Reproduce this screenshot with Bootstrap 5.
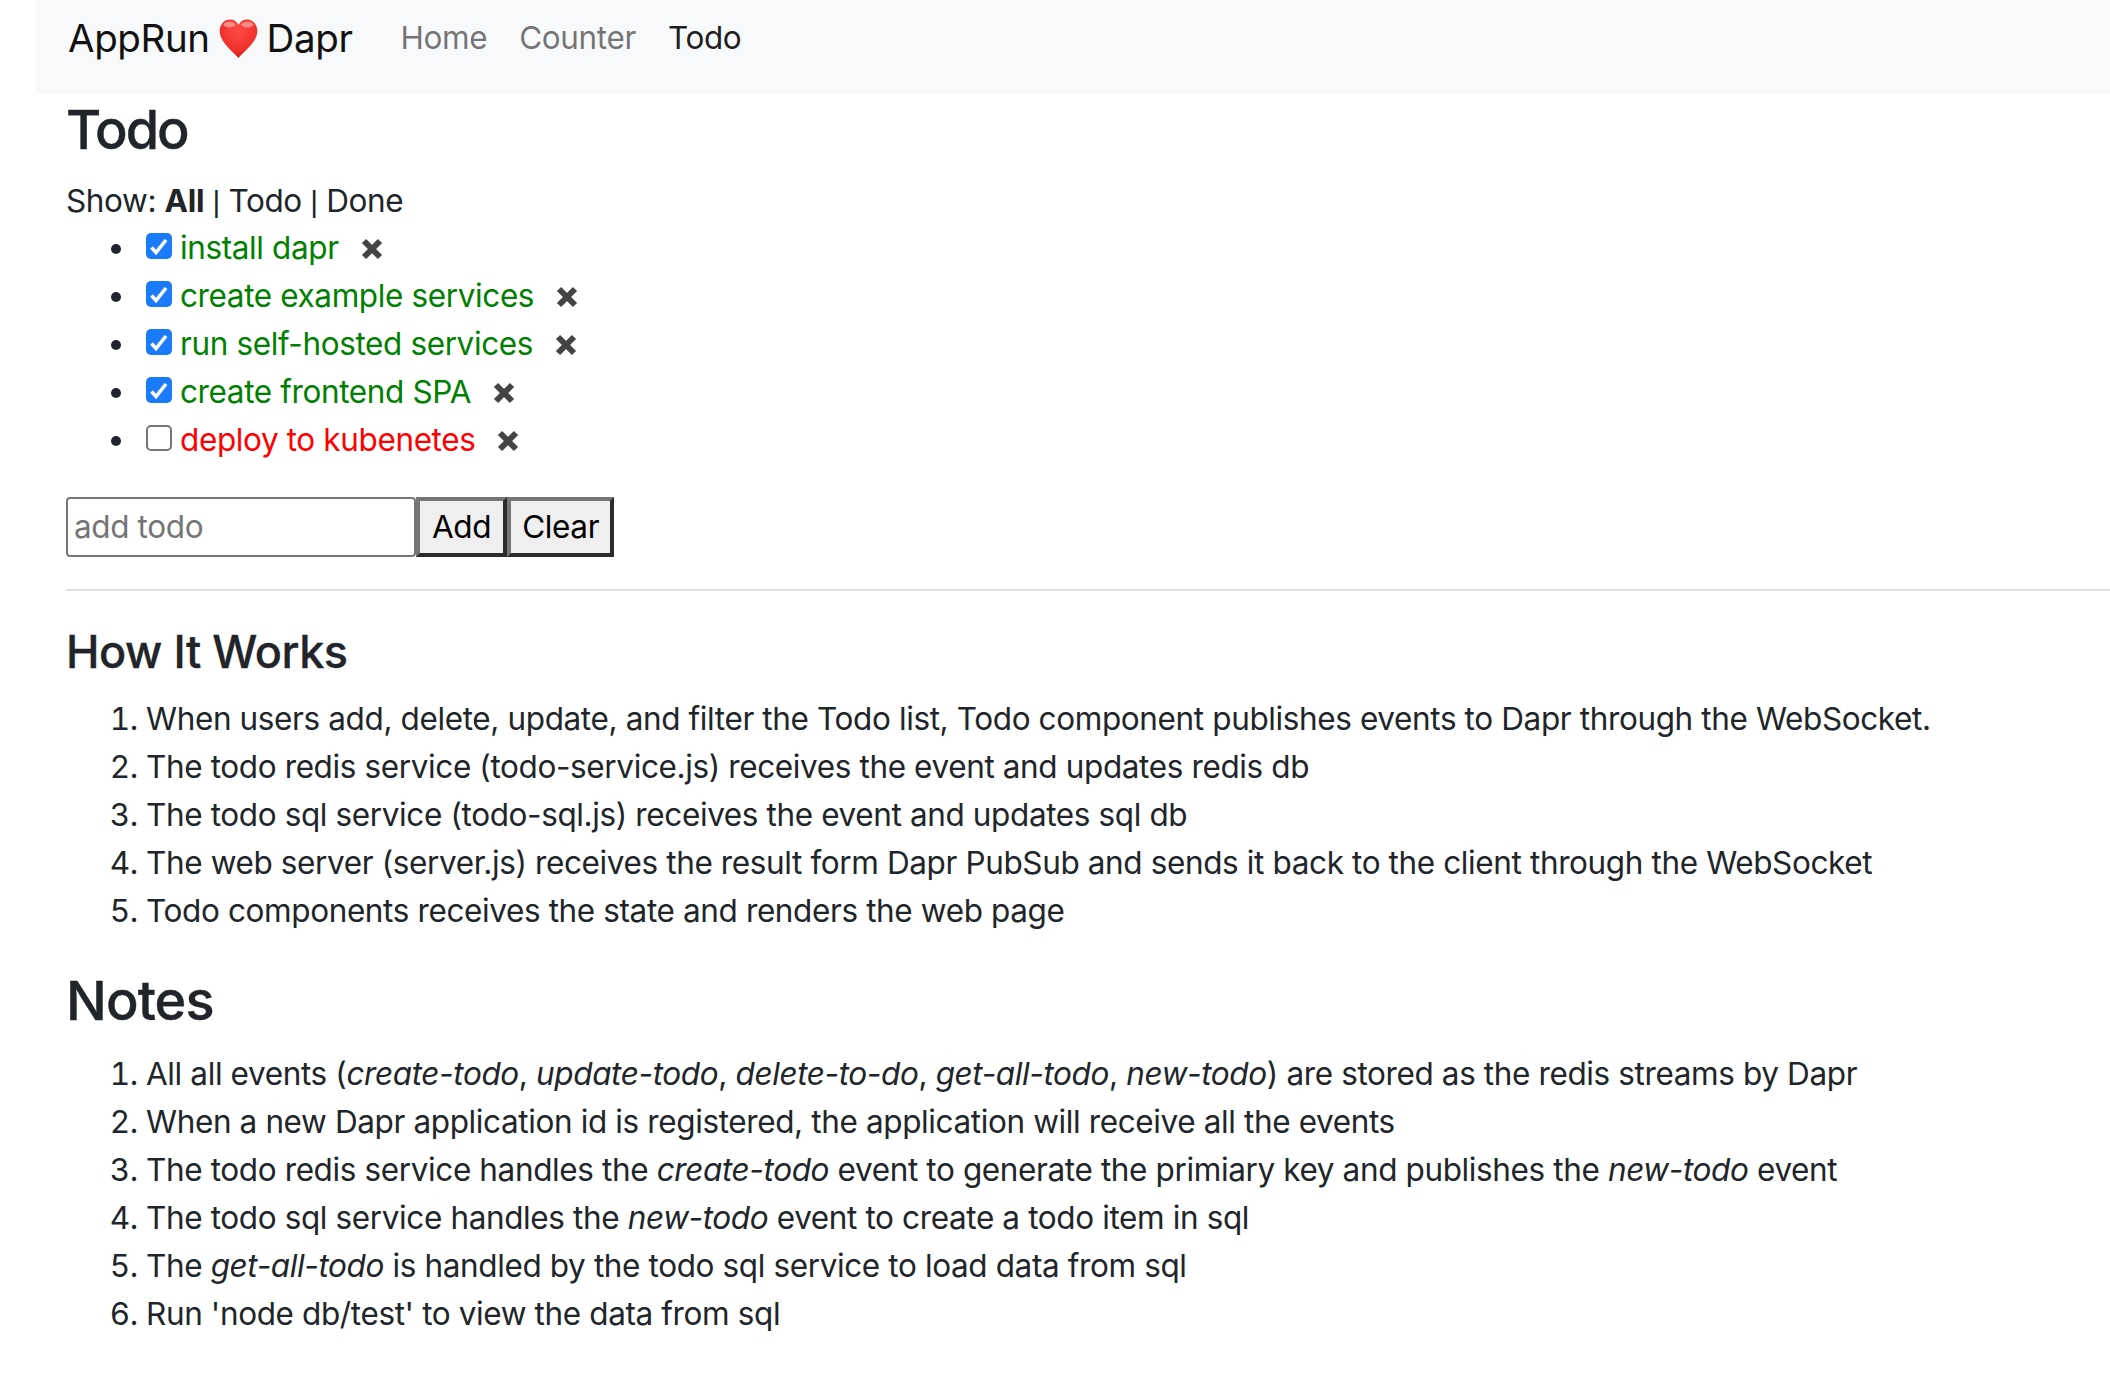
<!DOCTYPE html>
<html lang="en">
<head>
<meta charset="utf-8">
<title>AppRun Dapr</title>
<link href="https://cdn.jsdelivr.net/npm/bootstrap@5.3.0/dist/css/bootstrap.min.css" rel="stylesheet">
<style>
html { font-size: 32px; }
body { font-family: Inter, "Liberation Sans", sans-serif; font-size: 31.5px; overflow: hidden; letter-spacing: -0.38px; line-height: 48px; }
.page-shell { margin-left: 36px; }
.top-bar { height: 94px; padding: 14px 32px 0; align-items: flex-start; justify-content: flex-start; }
.top-bar .navbar-brand { font-size: 38.5px; letter-spacing: -0.4px; margin-right: 32px; padding: 0; line-height: 48px; color: #111; display: flex; align-items: center; gap: 9px; }
.top-bar .nav-link { padding: 0 16px; font-size: 31.5px; line-height: 48px; color: rgba(0,0,0,.55); }
.top-bar .nav-link.active { color: rgba(0,0,0,.9); }
.main-area { padding-left: 30px; }
.page-title { font-size: 54px; font-weight: 500; letter-spacing: -0.9px; margin: 3px 0 15px; line-height: 65px; -webkit-text-stroke: .4px; }
.page-title.todo-head { letter-spacing: -2px; }
.page-title.notes-head { margin-bottom: 17px; }
.sub-title { font-size: 45px; font-weight: 500; letter-spacing: -0.45px; margin: 0 0 16px; line-height: 54px; -webkit-text-stroke: .3px; }
.show-line { margin: 0 0 -1px; height: 48px; }
.show-line a, .todo-x { color: inherit; text-decoration: none; }
.pipe-sep { font-family: "Liberation Sans", sans-serif; font-size: 30px; line-height: 1; }
.todo-list { margin: 0 0 33px; padding-left: 72px; }
.todo-list li { height: 48px; padding-left: 8px; }
.todo-list input { appearance: none; width: 26px; height: 26px; margin: 0 8px 0 0; vertical-align: 0; border: 2px solid #767676; border-radius: 5px; background: #fff; }
.todo-list input:checked { border: 0; background: #1a7cfa url("data:image/svg+xml,%3Csvg xmlns='http://www.w3.org/2000/svg' viewBox='0 0 26 26'%3E%3Cpath d='M5.5 14.5l4.5 5L20 7' fill='none' stroke='%23fff' stroke-width='3.6'/%3E%3C/svg%3E") center/100% no-repeat; }
.is-done { color: green; }
.is-open { color: red; }
.todo-x { margin-left: 22px; display: inline-block; vertical-align: 1px; line-height: 0; }
.add-form { display: flex; align-items: stretch; height: 60px; }
.add-input { width: 350px; border: 2px solid #767676; border-radius: 4px; padding: 0 6px; font-size: 31.5px; letter-spacing: -0.38px; }
.add-input::placeholder { color: #757575; }
.plain-btn { background: #efefef; border: 4px solid #767676; border-color: #767676 #2b2b2b #2b2b2b #767676; color: #000; padding: 0 12px; font-size: 31.5px; letter-spacing: -0.38px; line-height: 1; }
.plain-btn + .plain-btn { padding: 0 11px; }
.rule-line { margin: 32px 0 34px; border-top: 2px solid #000; opacity: .12; }
.step-list { padding-left: 80px; margin-bottom: 33px; }
</style>
</head>
<body>
<div class="page-shell">
  <nav class="navbar navbar-expand bg-light top-bar">
    <a class="navbar-brand" href="#">AppRun
      <svg width="39" height="39" viewBox="0 0 39 39" aria-hidden="true"><defs><radialGradient id="hg" cx=".5" cy=".3" r=".75"><stop offset="0" stop-color="#ff4b45"/><stop offset=".7" stop-color="#ee2e2a"/><stop offset="1" stop-color="#c9110e"/></radialGradient></defs><path d="M19.5 39C17 35 2 25 .8 13.5 0 6 5 .5 11 .5c4 0 7 2 8.5 5.5C21 2.5 24 .5 28 .5c6 0 11 5.5 10.2 13C37 25 22 35 19.5 39z" fill="url(#hg)"/><ellipse cx="10.5" cy="5.5" rx="6" ry="3" fill="#ffa5a0" opacity=".75"/><ellipse cx="28.5" cy="5.5" rx="6" ry="3" fill="#ffa5a0" opacity=".75"/></svg>
      Dapr</a>
    <ul class="navbar-nav">
      <li class="nav-item"><a class="nav-link" href="#">Home</a></li>
      <li class="nav-item"><a class="nav-link" href="#">Counter</a></li>
      <li class="nav-item"><a class="nav-link active" href="#">Todo</a></li>
    </ul>
  </nav>
  <main class="main-area">
    <h1 class="page-title todo-head">Todo</h1>
    <div class="show-line">Show: <a href="#"><strong>All</strong></a> <span class="pipe-sep">|</span> <a href="#">Todo</a> <span class="pipe-sep">|</span> <a href="#">Done</a></div>
    <ul class="todo-list">
      <li><input type="checkbox" checked><span class="is-done">install dapr</span><a class="todo-x" href="#" aria-label="delete"><svg width="22" height="22" viewBox="0 0 22 22"><path d="M3 3l16 16M19 3L3 19" stroke="#444" stroke-width="6"/></svg></a></li>
      <li><input type="checkbox" checked><span class="is-done">create example services</span><a class="todo-x" href="#" aria-label="delete"><svg width="22" height="22" viewBox="0 0 22 22"><path d="M3 3l16 16M19 3L3 19" stroke="#444" stroke-width="6"/></svg></a></li>
      <li><input type="checkbox" checked><span class="is-done">run self-hosted services</span><a class="todo-x" href="#" aria-label="delete"><svg width="22" height="22" viewBox="0 0 22 22"><path d="M3 3l16 16M19 3L3 19" stroke="#444" stroke-width="6"/></svg></a></li>
      <li><input type="checkbox" checked><span class="is-done">create frontend SPA</span><a class="todo-x" href="#" aria-label="delete"><svg width="22" height="22" viewBox="0 0 22 22"><path d="M3 3l16 16M19 3L3 19" stroke="#444" stroke-width="6"/></svg></a></li>
      <li><input type="checkbox"><span class="is-open">deploy to kubenetes</span><a class="todo-x" href="#" aria-label="delete"><svg width="22" height="22" viewBox="0 0 22 22"><path d="M3 3l16 16M19 3L3 19" stroke="#444" stroke-width="6"/></svg></a></li>
    </ul>
    <div class="add-form">
      <input class="add-input" placeholder="add todo">
      <button class="plain-btn">Add</button>
      <button class="plain-btn">Clear</button>
    </div>
    <hr class="rule-line">
    <h3 class="sub-title">How It Works</h3>
    <ol class="step-list">
      <li>When users add, delete, update, and filter the Todo list, Todo component publishes events to Dapr through the WebSocket.</li>
      <li>The todo redis service (todo-service.js) receives the event and updates redis db</li>
      <li>The todo sql service (todo-sql.js) receives the event and updates sql db</li>
      <li>The web server (server.js) receives the result form Dapr PubSub and sends it back to the client through the WebSocket</li>
      <li>Todo components receives the state and renders the web page</li>
    </ol>
    <h1 class="page-title notes-head">Notes</h1>
    <ol class="step-list">
      <li>All all events (<em>create-todo</em>, <em>update-todo</em>, <em>delete-to-do</em>, <em>get-all-todo</em>, <em>new-todo</em>) are stored as the redis streams by Dapr</li>
      <li>When a new Dapr application id is registered, the application will receive all the events</li>
      <li>The todo redis service handles the <em>create-todo</em> event to generate the primiary key and publishes the <em>new-todo</em> event</li>
      <li>The todo sql service handles the <em>new-todo</em> event to create a todo item in sql</li>
      <li>The <em>get-all-todo</em> is handled by the todo sql service to load data from sql</li>
      <li>Run 'node db/test' to view the data from sql</li>
    </ol>
  </main>
</div>
<script src="https://cdn.jsdelivr.net/npm/bootstrap@5.3.0/dist/js/bootstrap.bundle.min.js"></script>
</body>
</html>
